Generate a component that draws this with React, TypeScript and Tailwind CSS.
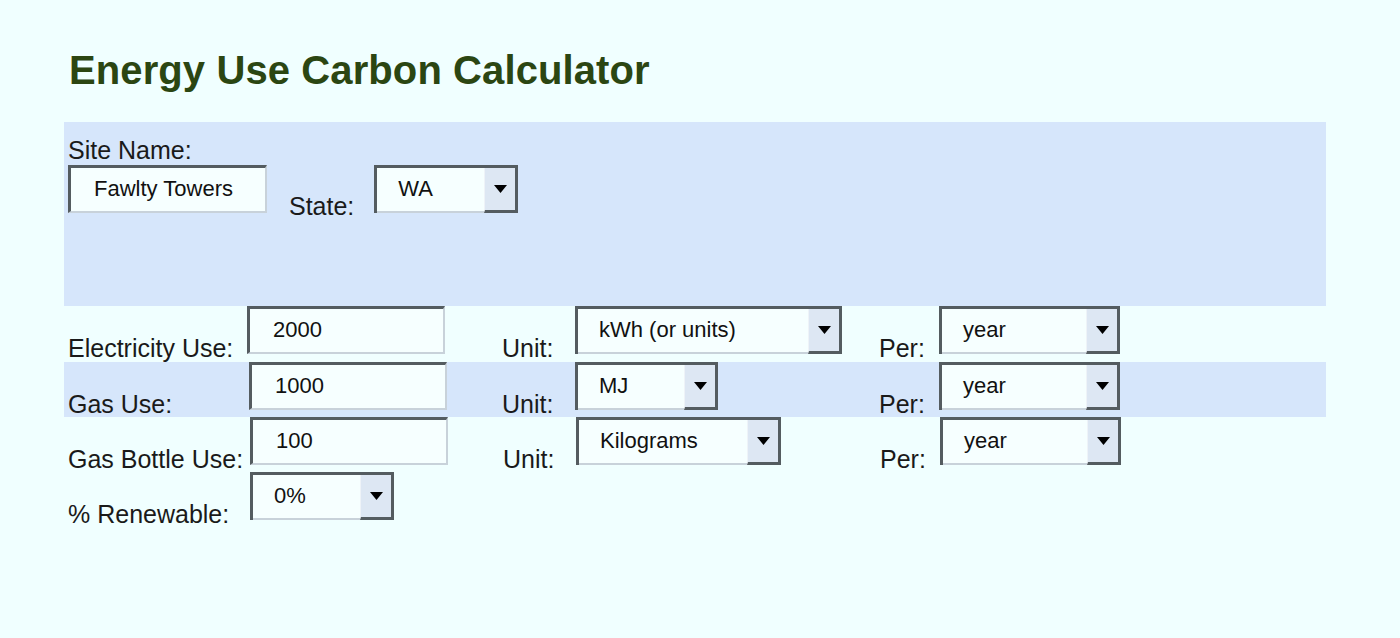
import React from "react";

const font = { fontFamily: '"Liberation Sans", Arial, sans-serif' };

function TextBox({ value, w }: { value: string; w: string }) {
  return (
    <div
      className={`${w} h-[48px] shrink-0 border-t-[3px] border-l-[3px] border-t-[#545c60] border-l-[#545c60] border-r-2 border-b-2 border-r-[#c8d2da] border-b-[#c8d2da] bg-[#f6ffff] pl-[23px] pt-[8px] text-[22px] leading-[26px] text-[#111] whitespace-nowrap`}
    >
      {value}
    </div>
  );
}

function Select({ value, w }: { value: string; w: string }) {
  return (
    <div className={`${w} h-[48px] shrink-0 flex border-t-[3px] border-l-[3px] border-t-[#545c60] border-l-[#545c60]`}>
      <div className="flex-1 bg-[#f6ffff] border-b-2 border-b-[#c8d2da] pl-[21px] pt-[8px] text-[22px] leading-[26px] text-[#111] whitespace-nowrap overflow-hidden">
        {value}
      </div>
      <div className="w-[34px] flex items-center justify-center bg-[#dde7f3] border-l border-l-[#eef3f8] border-r-[3px] border-b-[3px] border-r-[#545c60] border-b-[#545c60]">
        <svg width="13" height="8" viewBox="0 0 13 8">
          <path d="M0 0 H13 L6.5 8 Z" fill="#000" />
        </svg>
      </div>
    </div>
  );
}

// labels sit low in the row, their baseline just under the field's bottom edge
function Label({ text, w }: { text: string; w: string }) {
  return (
    <div className={`${w} shrink-0 mt-[30px] text-[25px] leading-[24px] text-[#1a1a1a] whitespace-nowrap`}>{text}</div>
  );
}

type Row = {
  label: string;
  h: string;
  field: string;
  value?: string;
  unit?: string;
  unitW?: string;
  band?: boolean;
  pct?: boolean;
};

const rows: Row[] = [
  { label: "Electricity Use:", h: "h-[56px]", field: "w-[179px]", value: "2000", unit: "kWh (or units)", unitW: "w-[267px]" },
  { label: "Gas Use:", h: "h-[55px]", field: "w-[181px]", value: "1000", unit: "MJ", unitW: "w-[143px]", band: true },
  { label: "Gas Bottle Use:", h: "h-[55px]", field: "w-[182px]", value: "100", unit: "Kilograms", unitW: "w-[205px]" },
  { label: "% Renewable:", h: "h-[55px]", field: "w-[182px]", pct: true },
];

export default function App() {
  return (
    <div className="min-h-[638px] w-full bg-[#f0ffff]" style={font}>
      <div className="pl-[64px] pt-[47px]">
        <h1 className="pl-[5px] text-[40px] font-bold leading-[46px] text-[#2b4612] tracking-[0.1px]">
          Energy Use Carbon Calculator
        </h1>

        <div className="mt-[29px] w-[1262px] h-[184px] bg-[#d6e6fb] pl-[4px] pt-[16px]">
          <div className="text-[25px] leading-[24px] text-[#1a1a1a]">Site Name:</div>
          <div className="mt-[3px] flex items-start">
            <TextBox value="Fawlty Towers" w="w-[199px]" />
            <div className="ml-[22px] mt-[29px] text-[25px] leading-[24px] text-[#1a1a1a]">State:</div>
            <div className="ml-[20px]">
              <Select value="WA" w="w-[144px]" />
            </div>
          </div>
        </div>

        {rows.map((r) => (
          <div key={r.label} className={`w-[1262px] ${r.h} flex items-start pl-[4px] ${r.band ? "bg-[#d6e6fb]" : ""}`}>
            <Label text={r.label} w={r.field} />
            {r.pct ? <Select value="0%" w="w-[144px]" /> : <TextBox value={r.value ?? ""} w="w-[198px]" />}
            {!r.pct && (
              <>
                <Label text="Unit:" w={r.field === "w-[179px]" ? "w-[73px] ml-[57px]" : "w-[73px] ml-[55px]"} />
                <div className="w-[304px] flex">
                  <Select value={r.unit ?? ""} w={r.unitW ?? ""} />
                </div>
                <Label text="Per:" w="w-[60px]" />
                <Select value="year" w="w-[181px]" />
              </>
            )}
          </div>
        ))}
      </div>
    </div>
  );
}
